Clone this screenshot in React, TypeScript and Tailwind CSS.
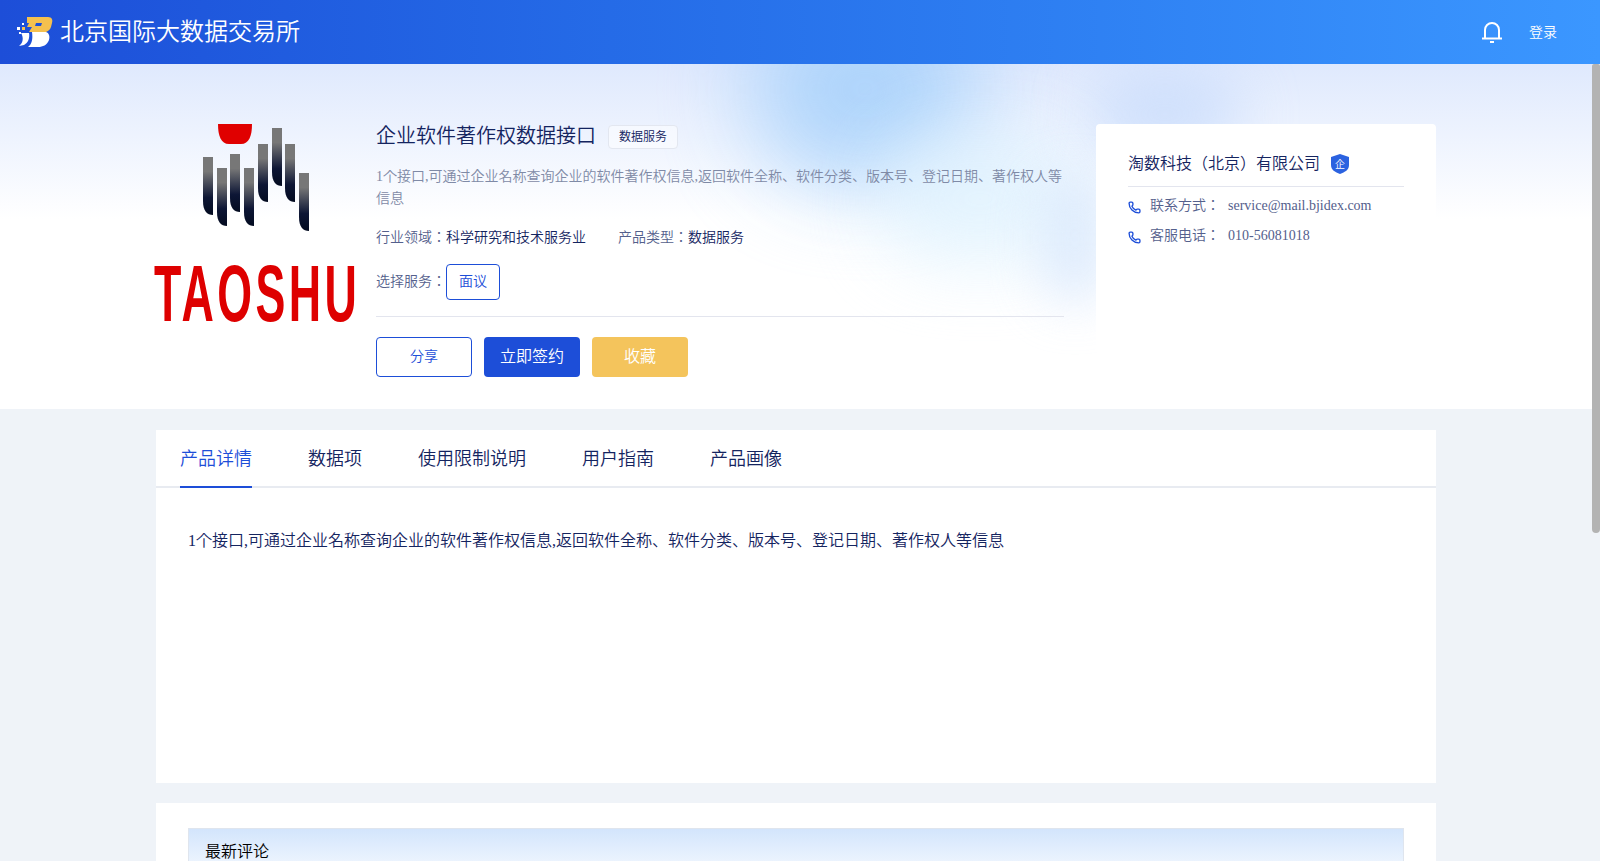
import React from 'react';
import { Phone } from 'lucide-react';

const tabs = ['产品详情', '数据项', '使用限制说明', '用户指南', '产品画像'];

const bars = [
  { x: 0, y: 33 },
  { x: 14, y: 44 },
  { x: 27, y: 30 },
  { x: 41, y: 44 },
  { x: 55, y: 20 },
  { x: 69, y: 4 },
  { x: 82, y: 20 },
  { x: 96, y: 49 },
];

const Logo = () => (
  <svg width="36" height="30" viewBox="0 0 36 30">
    <path
      fillRule="evenodd"
      d="M10 0h21c4 0 5 3 4 6l-1 4c-1 3-3 4-5 5H12l3-5h-5l2-4h-2zM19 6l-1 3h6l1-3z"
      fill="#f5c04e"
    />
    <path d="M15 15h14c3 1 4 4 3 8-2 5-6 7-11 7H11c4-3 5-8 4-15z" fill="#fff" />
    <path d="M4 16h8c1 5-1 10-5 12l-5 1c4-3 5-8 2-13z" fill="#fff" />
    <rect x="0" y="10" width="3" height="3" fill="#fff" />
    <rect x="5" y="6" width="2" height="2" fill="#fff" />
    <rect x="5" y="10" width="3" height="3" fill="#f5c04e" />
    <rect x="2" y="15" width="2" height="2" fill="#fff" />
  </svg>
);

const BrandMark = () => (
  <svg width="106" height="107" viewBox="0 0 106 107">
    <defs>
      <linearGradient id="barFade" x1="0" y1="0" x2="0" y2="1">
        <stop offset="0.25" stopColor="#777777" />
        <stop offset="0.7" stopColor="#0d1635" />
        <stop offset="1" stopColor="#030b20" />
      </linearGradient>
    </defs>
    <path d="M15 0h34c0 12-3 20-11 20H26C18 20 15 12 15 0z" fill="#e00000" />
    {bars.map((b) => (
      <path key={b.x} d={`M${b.x} ${b.y}h10v58c-6 0-10-4-10-14z`} fill="url(#barFade)" />
    ))}
  </svg>
);

const ShieldBadge = () => (
  <svg width="18" height="20" viewBox="0 0 18 20" className="ml-[11px]">
    <path d="M9 0l9 3v8c0 5-4 7-9 9-5-2-9-4-9-9V3z" fill="#2b62e0" />
    <text x="9" y="13.5" textAnchor="middle" fontSize="10" fill="#fff">企</text>
  </svg>
);

export default function App() {
  return (
    <div className="h-screen flex flex-col overflow-hidden bg-[#eff3f8] font-[350] font-['Liberation_Serif','Noto_Sans_CJK_JP',serif] text-[#14245f]">
      <header className="h-16 shrink-0 flex items-center justify-between pl-[17px] pr-[43px] bg-gradient-to-r from-[#1d4ed8] to-[#3b97ff] text-white">
        <div className="flex items-center">
          <Logo />
          <span className="ml-[7px] text-2xl leading-8">北京国际大数据交易所</span>
        </div>
        <div className="flex items-center">
          <svg width="20" height="22" viewBox="0 0 20 22" fill="none" stroke="#fff" strokeWidth="2">
            <path d="M3 17V9a7 7 0 0 1 14 0v8" />
            <path d="M0 17.5h20" />
            <path d="M8 21h4" />
          </svg>
          <span className="ml-[27px] text-sm leading-6 pt-px">登录</span>
        </div>
      </header>

      <main className="relative flex-1 overflow-hidden pr-2">
        <section className="relative h-[345px] overflow-hidden bg-gradient-to-b from-[#dfe9fd] via-white via-45% to-white">
          <div className="absolute left-[750px] top-[-70px] w-[230px] h-[190px] rounded-full bg-[#a9d2fb] opacity-90 blur-[45px]" />
          <div className="absolute left-[1090px] top-[10px] w-[150px] h-[80px] rounded-full bg-[#bcd4fb] opacity-60 blur-[30px]" />
          <div className="absolute left-[880px] top-[70px] w-[200px] h-[130px] rounded-full bg-[#dff2fe] opacity-80 blur-[35px]" />
          <div className="absolute left-[1040px] top-[110px] w-[70px] h-[130px] rounded-full bg-[#d4e5fc] opacity-70 blur-[25px]" />
          <div className="relative w-[1280px] mx-auto pt-[60px] flex">
            <div className="w-[200px] shrink-0 flex flex-col items-center">
              <BrandMark />
              <div className="mt-[34px] w-[200px] pl-1 flex justify-center text-[#de0000] text-[80px] leading-[58px] font-bold tracking-[6px] whitespace-nowrap font-['Liberation_Sans',sans-serif] scale-x-[0.56]">TAOSHU</div>
            </div>
            <div className="ml-5 w-[688px] shrink-0">
              <div className="flex items-center">
                <h1 className="-mt-px text-xl leading-6">企业软件著作权数据接口</h1>
                <span className="ml-3 mt-px px-[10px] h-6 leading-[22px] text-xs border border-[#e3e7f0] rounded-sm bg-white/50">数据服务</span>
              </div>
              <p className="mt-[17px] text-sm leading-[22px] text-[#7f8aa6]">1个接口,可通过企业名称查询企业的软件著作权信息,返回软件全称、软件分类、版本号、登记日期、著作权人等信息</p>
              <div className="mt-[17px] flex text-sm leading-[22px]">
                <div className="text-[#54608c]">行业领域：<span className="text-[#14245f]">科学研究和技术服务业</span></div>
                <div className="ml-8 text-[#54608c]">产品类型：<span className="text-[#14245f]">数据服务</span></div>
              </div>
              <div className="mt-[15px] flex items-center text-sm">
                <span className="text-[#54608c]">选择服务：</span>
                <span className="w-[54px] h-9 flex items-center justify-center border border-[#1d4ed8] rounded text-[#1d4ed8] bg-white">面议</span>
              </div>
              <div className="mt-4 border-t border-[#e3e5ee]" />
              <div className="mt-5 flex gap-3">
                <button className="w-24 h-10 border border-[#1d4ed8] rounded text-sm text-[#1d4ed8] bg-white">分享</button>
                <button className="w-24 h-10 rounded bg-[#1d4ed8] text-white">立即签约</button>
                <button className="w-24 h-10 rounded bg-[#f4c45c] text-white">收藏</button>
              </div>
            </div>
            <div className="ml-8 w-[340px] h-[230px] rounded bg-white px-8 pt-7">
              <div className="flex items-center pb-[10px] border-b border-[#e3e5ee]">
                <span className="leading-6">淘数科技（北京）有限公司</span>
                <ShieldBadge />
              </div>
              <div className="mt-2 flex items-center text-sm leading-[22px] text-[#54608c]">
                <Phone className="w-[13px] h-[13px] text-[#1d4ed8] mr-[9px] mt-0.5" strokeWidth={2.5} />
                <span className="w-[78px]">联系方式：</span>
                <span>service@mail.bjidex.com</span>
              </div>
              <div className="mt-2 flex items-center text-sm leading-[22px] text-[#54608c]">
                <Phone className="w-[13px] h-[13px] text-[#1d4ed8] mr-[9px] mt-0.5" strokeWidth={2.5} />
                <span className="w-[78px]">客服电话：</span>
                <span>010-56081018</span>
              </div>
            </div>
          </div>
        </section>

        <section className="w-[1280px] mx-auto mt-[21px] bg-white h-[353px]">
          <div className="h-[58px] flex gap-14 px-6 border-b-2 border-[#e8ebf1]">
            {tabs.map((t, i) => (
              <div
                key={t}
                className={i === 0 ? 'h-[58px] leading-[58px] text-lg text-[#1d4ed8] border-b-2 border-[#1d4ed8]' : 'h-[58px] leading-[58px] text-lg'}
              >
                {t}
              </div>
            ))}
          </div>
          <p className="mt-[41px] px-8 leading-6">1个接口,可通过企业名称查询企业的软件著作权信息,返回软件全称、软件分类、版本号、登记日期、著作权人等信息</p>
        </section>

        <section className="w-[1280px] mx-auto mt-5 bg-white pt-[25px] px-8 h-[200px]">
          <div className="h-[60px] border-x border-t border-[#dfe5ee] bg-gradient-to-b from-[#d3e5fc] to-white pl-4 pt-[11px] text-black leading-6">最新评论</div>
        </section>

        {/* scrollbar thumb, headless chrome hides the real one */}
        <div className="absolute right-0 top-0 w-2 h-[469px] rounded-b-lg rounded-t-sm bg-[#b3b3b3]" />
      </main>
    </div>
  );
}
